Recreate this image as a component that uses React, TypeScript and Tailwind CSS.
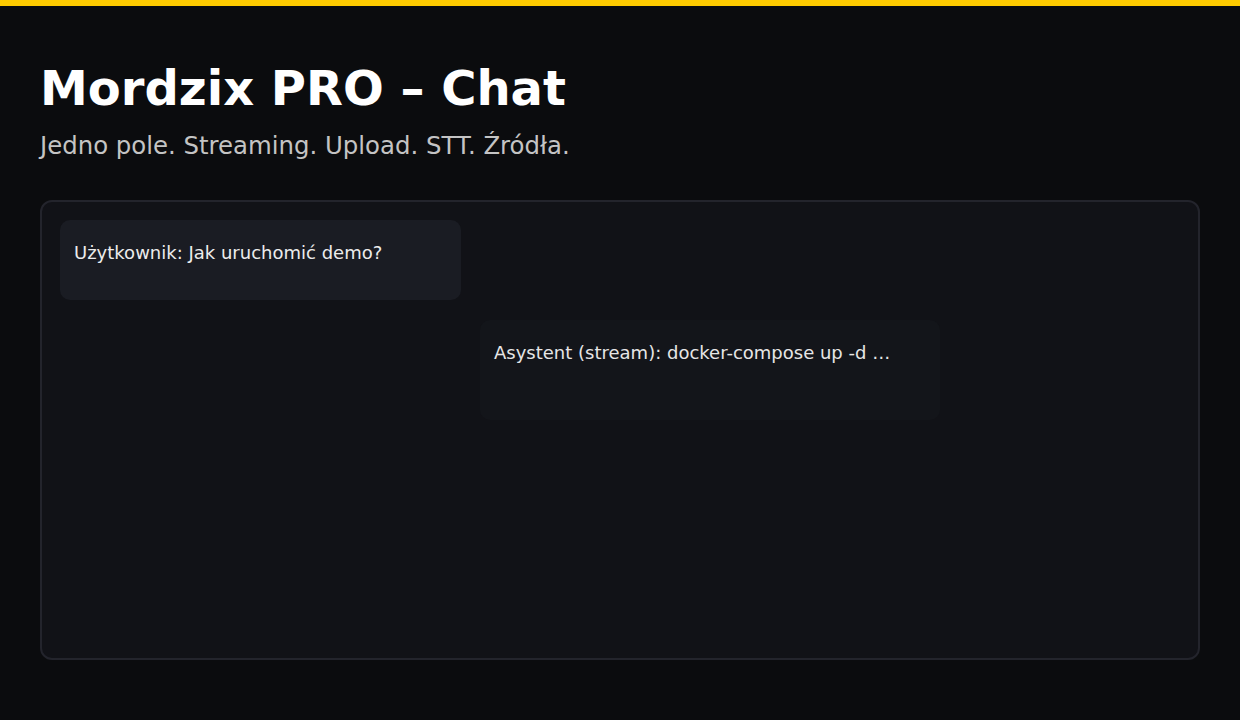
export default function App() {
  const font = { fontFamily: '"DejaVu Sans", "Noto Sans", sans-serif' };

  return (
    <div className="min-h-[720px] bg-[#0b0c0e] text-white" style={font}>
      <div className="h-[6px] bg-[#ffcc00]" />
      <div className="px-[40px] pt-[54px]">
        <h1 className="text-[48px] font-bold leading-[56px] text-white">Mordzix PRO – Chat</h1>
        <p className="mt-[16px] text-[24.4px] leading-[28px] text-[#c4c4c4]">
          Jedno pole. Streaming. Upload. STT. Źródła.
        </p>

        <div className="mt-[40px] h-[460px] rounded-[12px] border-2 border-[#23242c] bg-[#111217] p-[18px]">
          <div className="flex flex-col gap-[20px]">
            <div className="h-[80px] w-[401px] rounded-[10px] bg-[#1a1c23] px-[14px] pt-[22px] text-[18px] leading-[21px] text-[#ececec]">
              Użytkownik: Jak uruchomić demo?
            </div>
            <div className="ml-[420px] h-[100px] w-[460px] rounded-[10px] bg-[#13151a] px-[14px] pt-[22px] text-[18px] leading-[21px] text-[#e6e6e6]">
              Asystent (stream): docker-compose up -d …
            </div>
          </div>
        </div>
      </div>
    </div>
  );
}
